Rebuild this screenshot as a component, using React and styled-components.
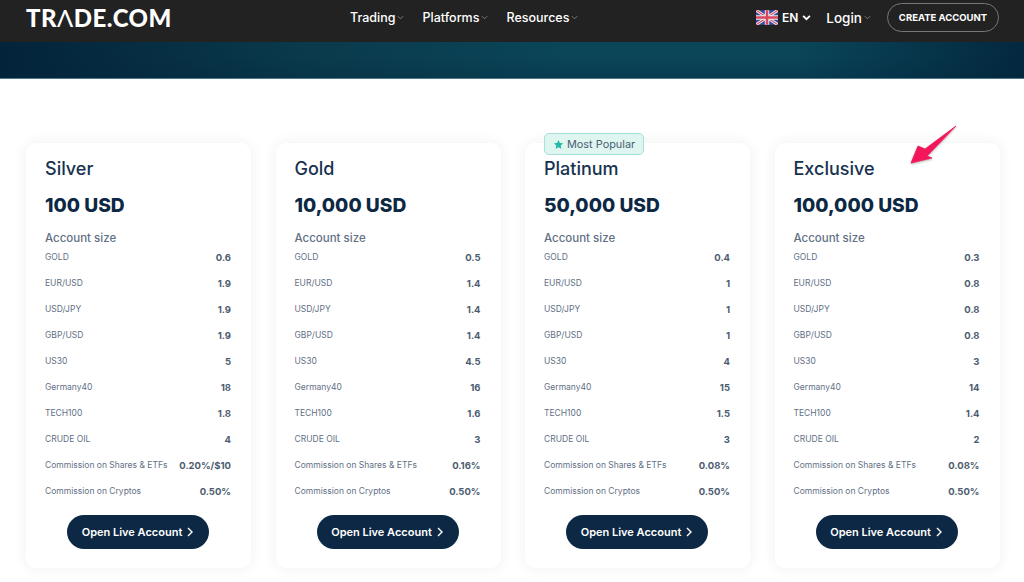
import React from "react";
import styled, { createGlobalStyle } from "styled-components";

const GlobalStyle = createGlobalStyle`
	html, body {
		margin: 0;
		padding: 0;
		background: #fff;
		overflow: hidden;
	}
	body {
		font-family: "Inter", "Liberation Sans", sans-serif;
		color: #0c2844;
	}
`;

const Page = styled.div`
	position: relative;
	width: 1024px;
	height: 582px;
	overflow: hidden;
`;

const Header = styled.header`
	height: 42px;
	display: flex;
	align-items: center;
	background: #222222;
	padding: 0 25px 0 26px;
	box-sizing: border-box;
	color: #fff;
`;

const Logo = styled.div`
	flex: 0 0 324px;
	font-family: "Lato", sans-serif;
	font-size: 24px;
	line-height: 24px;
	font-weight: 900;
	letter-spacing: 0.5px;
	margin-top: -7px;
	span {
		font-weight: 400;
	}
`;

const Nav = styled.nav`
	display: flex;
	gap: 18px;
`;

const NavItem = styled.div`
	display: flex;
	align-items: center;
	gap: 2px;
	font-size: 12.5px;
	font-weight: 500;
	margin-top: -7px;
`;

const Right = styled.div`
	margin-left: auto;
	display: flex;
	align-items: center;
`;

const Lang = styled.div`
	display: flex;
	align-items: center;
	font-size: 12px;
	font-weight: 600;
	gap: 4px;
	margin-right: 15px;
	margin-top: -7px;
`;

const Login = styled(NavItem)`
	font-size: 13.5px;
	margin-right: 16px;
`;

const CreateButton = styled.div`
	width: 112px;
	height: 29px;
	margin-top: -7px;
	display: flex;
	align-items: center;
	justify-content: center;
	border: 1px solid #777;
	border-radius: 15px;
	box-sizing: border-box;
	font-size: 9.5px;
	font-weight: 700;
`;

const Hero = styled.div`
	height: 37px;
	box-sizing: border-box;
	border-bottom: 1px solid #4d7a84;
	background:
		linear-gradient(180deg, rgba(3, 35, 58, 0) 40%, rgba(3, 35, 58, 0.25) 100%),
		linear-gradient(
			90deg,
			#03233a 0%,
			#0a3a4c 30%,
			#0a4558 55%,
			#0a4558 78%,
			#03283f 100%
		);
`;

const Plans = styled.main`
	display: grid;
	grid-template-columns: repeat(4, 225px);
	column-gap: 24.5px;
	padding: 64px 0 0 26px;
`;

const Card = styled.section`
	position: relative;
	height: 425px;
	padding: 15px 20px 0 19px;
	box-sizing: border-box;
	background: #fff;
	border-radius: 10px;
	box-shadow: 0 0 14px rgba(30, 40, 60, 0.07);
`;

const Badge = styled.div`
	position: absolute;
	left: 19px;
	top: -10px;
	height: 22px;
	padding: 0 8px;
	display: flex;
	align-items: center;
	gap: 3px;
	box-sizing: border-box;
	background: #def5f0;
	border: 1px solid #a4e0d5;
	border-radius: 5px;
	font-size: 10.9px;
	color: #4c5f74;
`;

const Title = styled.h2`
	margin: 0;
	font-size: 18px;
	line-height: 22px;
	font-weight: 500;
	color: #17324f;
`;

const Price = styled.div`
	margin-top: 12px;
	font-size: 19.2px;
	line-height: 26px;
	font-weight: 800;
	color: #0c2844;
`;

const Subtitle = styled.div`
	margin-top: 13px;
	font-size: 11.5px;
	line-height: 14px;
	font-weight: 500;
	color: #5f7085;
`;

const Rows = styled.div`
	margin-top: -1px;
`;

const Row = styled.div`
	height: 26px;
	display: flex;
	align-items: center;
	justify-content: space-between;
`;

const Label = styled.span`
	font-size: 8.5px;
	color: #5f7085;
`;

const Value = styled.span`
	font-size: 9.5px;
	font-weight: 700;
	color: #4c5c70;
`;

const OpenButton = styled.div`
	width: 142px;
	height: 34px;
	margin: 11px auto 0;
	display: flex;
	align-items: center;
	justify-content: center;
	gap: 4px;
	background: #0c2844;
	border-radius: 17px;
	color: #fff;
	font-size: 11px;
	font-weight: 600;
`;

const Arrow = styled.svg`
	position: absolute;
	left: 905px;
	top: 120px;
	filter: drop-shadow(0 1px 1px rgba(0, 0, 0, 0.3));
`;

const Chevron = ({ size = 7, color = "#888", width = 1 }) => (
	<svg width={size} height={size} viewBox="0 0 8 8" fill="none">
		<path d="M1 2.500 4 5.500 7 2.500" stroke={color} strokeWidth={width} />
	</svg>
);

const ChevronRight = () => (
	<svg width="8" height="10" viewBox="0 0 8 10" fill="none">
		<path d="M2 1 6 5 2 9" stroke="#fff" strokeWidth="1.4" />
	</svg>
);

const Flag = () => (
	<svg width="22" height="15" viewBox="0 0 60 40">
		<rect width="60" height="40" fill="#3a4a9c" />
		<path d="M0 0 60 40M60 0 0 40" stroke="#eee" strokeWidth="8" />
		<path d="M0 0 60 40M60 0 0 40" stroke="#d8475f" strokeWidth="3" />
		<path d="M30 0V40M0 20H60" stroke="#eee" strokeWidth="12" />
		<path d="M30 0V40M0 20H60" stroke="#d8475f" strokeWidth="7" />
	</svg>
);

const labels = [
	"GOLD",
	"EUR/USD",
	"USD/JPY",
	"GBP/USD",
	"US30",
	"Germany40",
	"TECH100",
	"CRUDE OIL",
	"Commission on Shares & ETFs",
	"Commission on Cryptos",
];

const plans = [
	{
		name: "Silver",
		price: "100 USD",
		values: ["0.6", "1.9", "1.9", "1.9", "5", "18", "1.8", "4", "0.20%/$10", "0.50%"],
	},
	{
		name: "Gold",
		price: "10,000 USD",
		values: ["0.5", "1.4", "1.4", "1.4", "4.5", "16", "1.6", "3", "0.16%", "0.50%"],
	},
	{
		name: "Platinum",
		price: "50,000 USD",
		popular: true,
		values: ["0.4", "1", "1", "1", "4", "15", "1.5", "3", "0.08%", "0.50%"],
	},
	{
		name: "Exclusive",
		price: "100,000 USD",
		values: ["0.3", "0.8", "0.8", "0.8", "3", "14", "1.4", "2", "0.08%", "0.50%"],
	},
];

export default function App() {
	return (
		<Page>
			<GlobalStyle />
			<Header>
				<Logo>
					TR<span>Λ</span>DE.COM
				</Logo>
				<Nav>
					{["Trading", "Platforms", "Resources"].map(item => (
						<NavItem key={item}>
							{item}
							<Chevron />
						</NavItem>
					))}
				</Nav>
				<Right>
					<Lang>
						<Flag />
						EN
						<Chevron size={9} color="#fff" width={1.6} />
					</Lang>
					<Login>
						Login
						<Chevron />
					</Login>
					<CreateButton>CREATE ACCOUNT</CreateButton>
				</Right>
			</Header>
			<Hero />
			<Plans>
				{plans.map(plan => (
					<Card key={plan.name}>
						{plan.popular && (
							<Badge>
								<svg width="11" height="11" viewBox="0 0 24 24" fill="#22b8a6">
									<path d="M12 2l3 6.600 7 .8-5.200 4.800 1.400 7.100L12 17.800 5.800 21.300l1.400-7.100L2 9.400l7-.8z" />
								</svg>
								Most Popular
							</Badge>
						)}
						<Title>{plan.name}</Title>
						<Price>{plan.price}</Price>
						<Subtitle>Account size</Subtitle>
						<Rows>
							{labels.map((label, i) => (
								<Row key={label}>
									<Label>{label}</Label>
									<Value>{plan.values[i]}</Value>
								</Row>
							))}
						</Rows>
						<OpenButton>
							Open Live Account
							<ChevronRight />
						</OpenButton>
					</Card>
				))}
			</Plans>
			<Arrow width="56" height="46" viewBox="0 0 56 46">
				<path
					d="M51 6 22 36 27 38 6 43 13 26 20 29 Z"
					fill="#f3175a"
					stroke="#f3175a"
					strokeWidth="0.8"
					strokeLinejoin="round"
				/>
			</Arrow>
		</Page>
	);
}
